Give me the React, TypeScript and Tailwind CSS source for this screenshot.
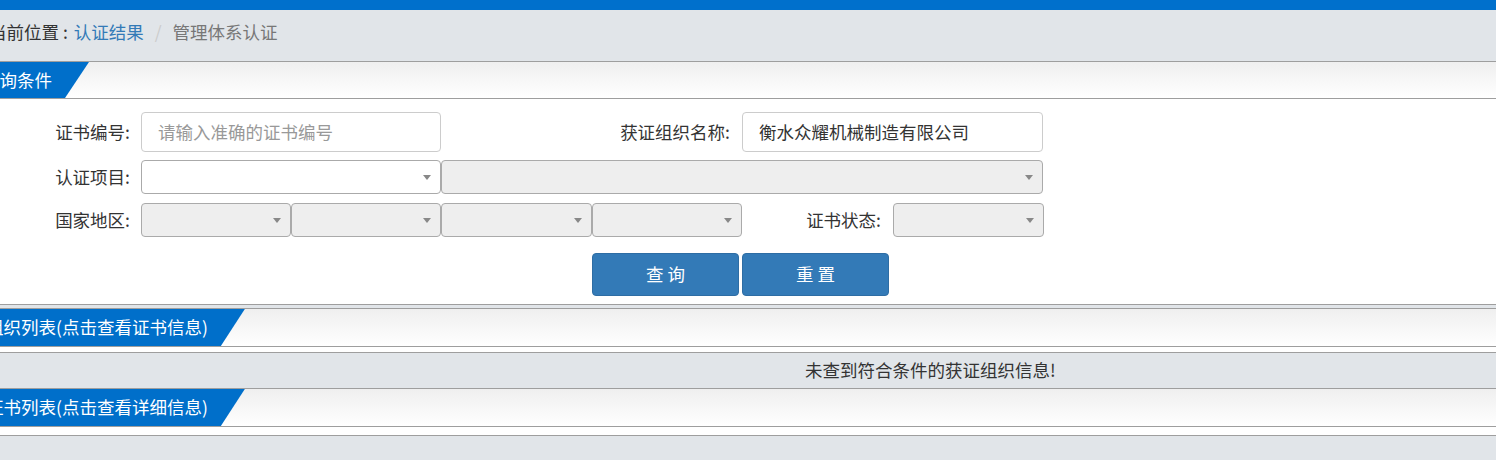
import React from "react";

const font = { fontFamily: '"Noto Sans CJK SC", "Noto Sans", sans-serif' };

function Caret() {
  return (
    <span className="h-0 w-0 border-x-[4px] border-t-[5px] border-x-transparent border-t-[#888]" />
  );
}

function Select({ width, disabled = true }: { width: string; disabled?: boolean }) {
  return (
    <div
      className={`flex h-[34px] items-center justify-end rounded-[4px] border border-[#aaa] pr-[9px] ${width} ${
        disabled ? "bg-[#eee]" : "bg-white"
      }`}
    >
      <Caret />
    </div>
  );
}

function SectionHeader({ title, h, pad }: { title: string; h: string; pad: string }) {
  return (
    <div className={`flex ${h} border-b border-[#9e9e9e] bg-linear-to-b from-[#efefef] to-white`}>
      <div
        className={`-ml-[30px] flex items-center bg-[#006fca] ${pad} pr-[37px] text-[17.5px] text-white [clip-path:polygon(0_0,100%_0,calc(100%-24px)_100%,0_100%)]`}
      >
        {title}
      </div>
    </div>
  );
}

export default function App() {
  return (
    <div className="min-h-[460px] overflow-hidden bg-[#e1e5e9] text-[#333]" style={font}>
      <div className="h-[10px] bg-[#0070cc]" />
      <div className="h-[51px] whitespace-nowrap pt-[10px] text-[17.5px] leading-[24px]">
        <span className="-ml-[11px]">当前位置 : </span>
        <span className="pl-[2px] text-[#337ab7]">认证结果</span>
        <span className="px-[11px] text-[#ccc]">/</span>
        <span className="text-[#777]">管理体系认证</span>
      </div>

      <div className="border-y border-[#9e9e9e] bg-white">
        <SectionHeader title="查询条件" h="h-[37px]" pad="pl-[12px]" />
        <div className="pb-[8px] pt-[13px] text-[17.5px]">
          <div className="flex items-center">
            <div className="w-[141px] pr-[11px] text-right">证书编号:</div>
            <div className="flex h-[40px] w-[300px] items-center rounded-[4px] border border-[#ccc] px-[16px] text-[#999]">
              请输入准确的证书编号
            </div>
            <div className="w-[301px] pr-[12px] text-right">获证组织名称:</div>
            <div className="flex h-[40px] w-[301px] items-center rounded-[4px] border border-[#ccc] px-[16px] text-[#333]">
              衡水众耀机械制造有限公司
            </div>
          </div>
          <div className="mt-[8px] flex items-center">
            <div className="w-[141px] pr-[11px] text-right">认证项目:</div>
            <Select width="w-[300px]" disabled={false} />
            <Select width="w-[602px]" />
          </div>
          <div className="mt-[9px] flex items-center">
            <div className="w-[141px] pr-[11px] text-right">国家地区:</div>
            <Select width="w-[150px]" />
            <Select width="w-[150px]" />
            <Select width="w-[151px]" />
            <Select width="w-[150px]" />
            <div className="w-[151px] pr-[12px] text-right">证书状态:</div>
            <Select width="w-[151px]" />
          </div>
          <div className="mt-[16px] flex gap-[3px] pl-[592px]">
            <button className="h-[43px] w-[147px] rounded-[4px] border border-[#2e6da4] bg-[#337ab7] pl-[4px] tracking-[4px] text-white">
              查询
            </button>
            <button className="h-[43px] w-[147px] rounded-[4px] border border-[#2e6da4] bg-[#337ab7] pl-[4px] tracking-[4px] text-white">
              重置
            </button>
          </div>
        </div>
      </div>

      <div className="mt-[3px] border-y border-[#9e9e9e] bg-white">
        <SectionHeader title="组织列表(点击查看证书信息)" h="h-[38px]" pad="pl-[16px]" />
        <div className="h-[5px]" />
      </div>
      <div className="flex h-[35px] items-center pl-[805px] text-[17.5px]">未查到符合条件的获证组织信息!</div>

      <div className="border-y border-[#9e9e9e] bg-white">
        <SectionHeader title="证书列表(点击查看详细信息)" h="h-[38px]" pad="pl-[16px]" />
        <div className="h-[8px]" />
      </div>
    </div>
  );
}
